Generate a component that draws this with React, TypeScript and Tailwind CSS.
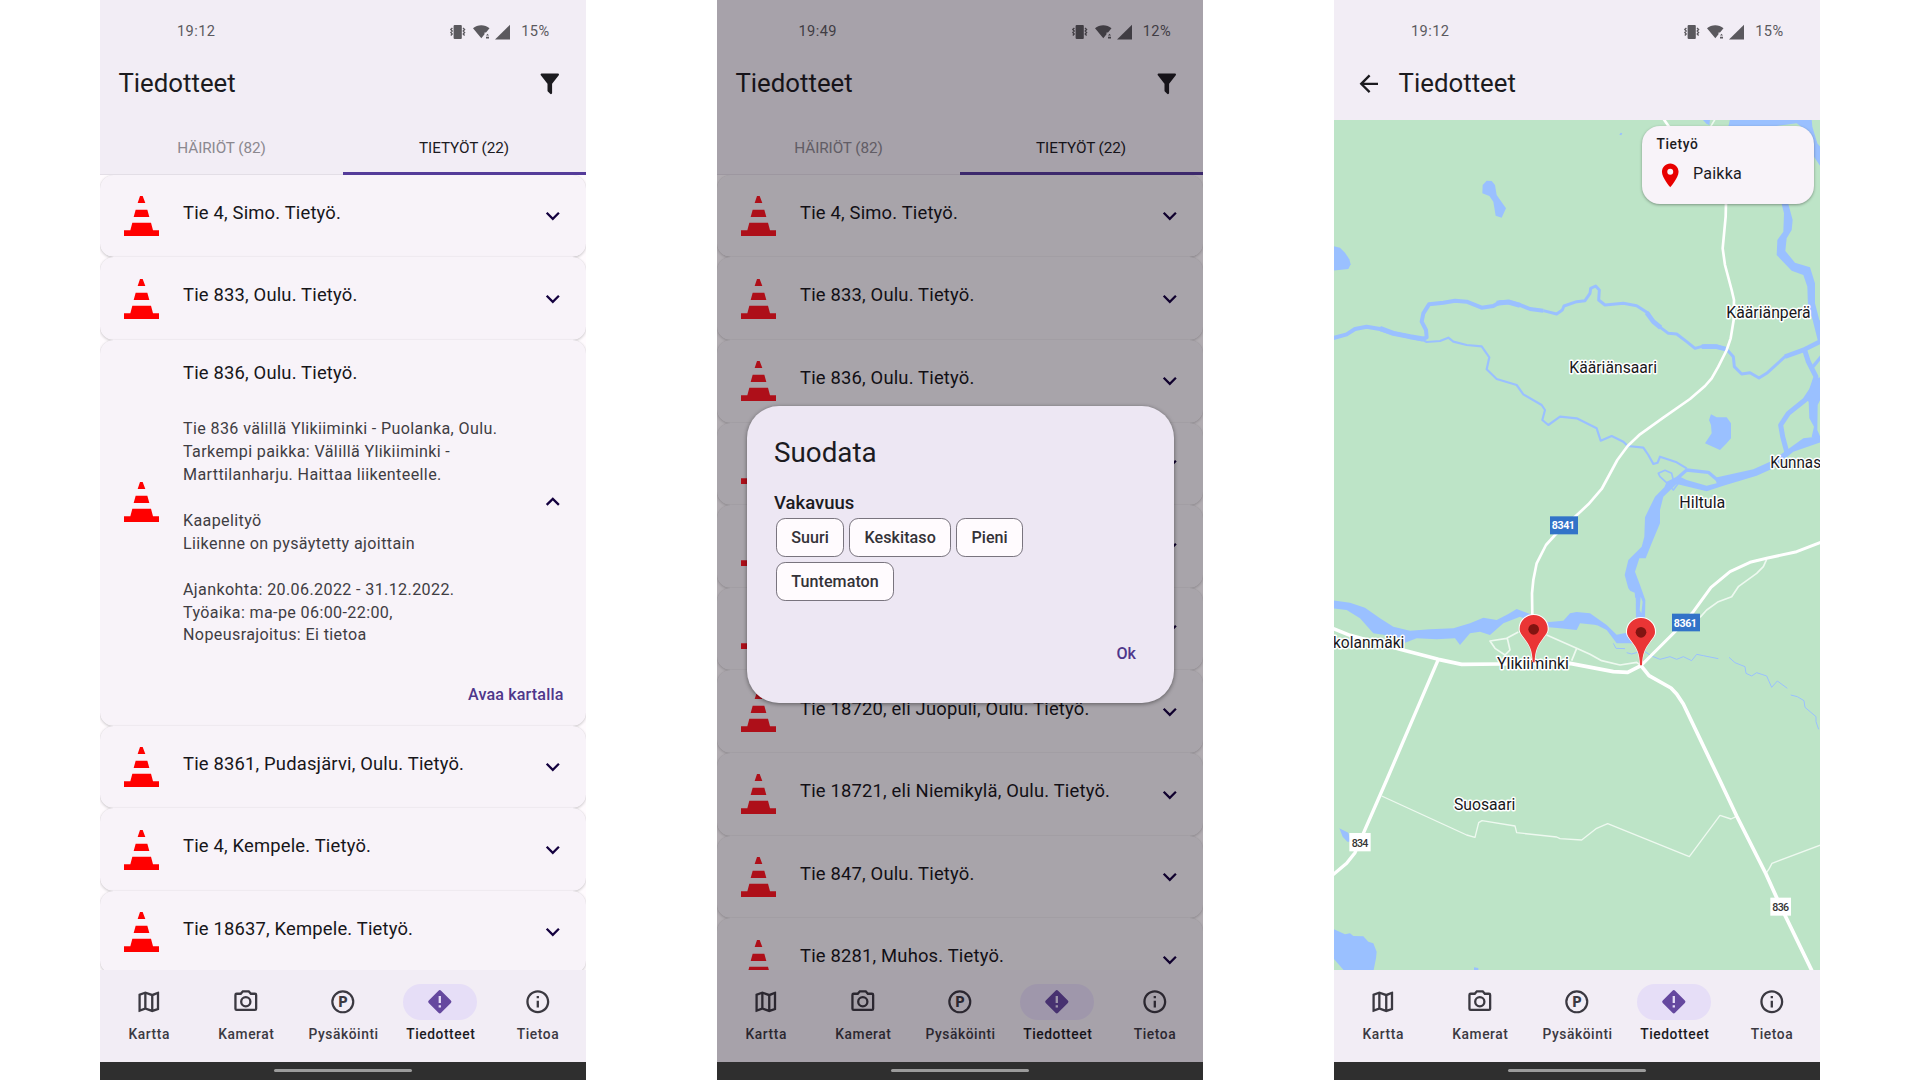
import React from "react";
import { MdExpandMore, MdExpandLess, MdArrowBack, MdOutlineInfo, MdLocationOn } from "react-icons/md";

const PATHS = {
  filter:
    "M14,12V19.88C14.04,20.18 13.94,20.5 13.71,20.71C13.32,21.1 12.69,21.1 12.3,20.71L10.29,18.7C10.06,18.47 9.96,18.16 10,17.87V12H9.97L4.21,4.62C3.87,4.19 3.95,3.56 4.38,3.22C4.57,3.08 4.78,3 5,3H19C19.22,3 19.43,3.08 19.62,3.22C20.05,3.56 20.13,4.19 19.79,4.62L14.03,12H14Z",
  map: "M20.5,3L20.34,3.03L15,5.1L9,3L3.36,4.9C3.15,4.97 3,5.15 3,5.38V20.5A0.5,0.5 0 0,0 3.5,21L3.66,20.97L9,18.9L15,21L20.64,19.1C20.85,19.03 21,18.85 21,18.62V3.5A0.5,0.5 0 0,0 20.5,3M10,5.47L14,6.87V18.53L10,17.13V5.47M5,6.46L8,5.45V17.15L5,18.31V6.46M19,17.54L16,18.55V6.86L19,5.7V17.54Z",
  camera:
    "M20,4H16.83L15,2H9L7.17,4H4A2,2 0 0,0 2,6V18A2,2 0 0,0 4,20H20A2,2 0 0,0 22,18V6A2,2 0 0,0 20,4M20,18H4V6H8.05L9.88,4H14.12L15.95,6H20V18M12,7A5,5 0 0,0 7,12A5,5 0 0,0 12,17A5,5 0 0,0 17,12A5,5 0 0,0 12,7M12,15A3,3 0 0,1 9,12A3,3 0 0,1 12,9A3,3 0 0,1 15,12A3,3 0 0,1 12,15Z",
};

function Glyph({ d }: { d: string }) {
  return (
    <svg viewBox="0 0 24 24" className="size-[27.6px] fill-current">
      <path d={d} />
    </svg>
  );
}

function StatusBar({ time, battery, shifted }: { time: string; battery: string; shifted?: boolean }) {
  return (
    <div
      className={
        "flex h-[62px] shrink-0 items-center pt-[2px] text-[14.6px] tracking-[0.4px] text-[#5b595e] " +
        (shifted ? "pr-[32px] pl-[81.5px]" : "pr-[36.5px] pl-[77px]")
      }
    >
      <span>{time}</span>
      <svg viewBox="0 0 60 16" className="mr-px mb-px ml-auto h-4 w-[60px] fill-[#5b595e]">
        <rect x="3.6" y="1" width="8.2" height="14" rx="1" />
        <path
          d="M2.4 4 L.8 5.5 L2.2 7 L.8 8.5 L2.2 10 L.8 11.5 M13 4 L14.6 5.5 L13.2 7 L14.6 8.5 L13.2 10 L14.6 11.5"
          fill="none"
          stroke="#5b595e"
          strokeWidth="1.3"
        />
        <path d="M23 4.3 C27.5 .3 35 .3 39.5 4.3 L36 8.4 L34.5 8.4 L34.5 10.3 L31.3 14.2 Z" />
        <path d="M36 11.4 L37.5 9.8 L39 11.4Z M36 12.8 H39 V14.4 H36Z" />
        <path d="M60 .8 V15.6 H45 Z" />
      </svg>
      <span className="ml-[10px]">{battery}</span>
    </div>
  );
}

function Cone({ muted }: { muted?: boolean }) {
  return (
    <svg viewBox="102 587 105 120" className={"ml-6 h-10 w-[35px] shrink-0 " + (muted ? "fill-[#fd161f]" : "fill-[#ff0000]")}>
      <path d="M150 587H158L166 608H143Z M137 628H172L178 650H131Z M127 667H183L189 690H207V707H102V690H121Z" />
    </svg>
  );
}

const cardClass =
  "shrink-0 rounded-[13.8px] shadow-[0_1px_3px_rgba(0,0,0,0.2),0_0_1px_rgba(0,0,0,0.08)] text-[#17161a] ";
const rowTitle = "text-[18.4px] leading-[27px] tracking-[0.18px]";

function Row({ title, muted }: { title: string; muted?: boolean }) {
  return (
    <div className={cardClass + "flex h-[82.65px] items-center " + (muted ? "bg-[#f4f1f5]" : "bg-[#f8f3f9]")}>
      <Cone muted={muted} />
      <div className={rowTitle + " ml-6 flex-1 pb-[7.5px] whitespace-nowrap"}>{title}</div>
      <MdExpandMore className="mr-[19.1px] size-[27.6px] text-[#14003f]" />
    </div>
  );
}

function ExpandedRow() {
  return (
    <div className={cardClass + "flex h-[385.8px] flex-col bg-[#f8f3f9]"}>
      <div className="flex h-[324px] items-center">
        <Cone />
        <div className="ml-6 flex-1 self-stretch pt-[19.4px]">
          <div className={rowTitle}>Tie 836, Oulu. Tietyö.</div>
          <div className="mt-[31.6px] text-[16.1px] leading-[22.96px] tracking-[0.37px] whitespace-pre text-[#3f3d43]">
            {`Tie 836 välillä Ylikiiminki - Puolanka, Oulu.
Tarkempi paikka: Välillä Ylikiiminki -
Marttilanharju. Haittaa liikenteelle.

Kaapelityö
Liikenne on pysäytetty ajoittain

Ajankohta: 20.06.2022 - 31.12.2022.
Työaika: ma-pe 06:00-22:00,
Nopeusrajoitus: Ei tietoa`}
          </div>
        </div>
        <MdExpandLess className="mr-[19.1px] size-[27.6px] text-[#14003f]" />
      </div>
      <button className="mt-[19.5px] mr-[22.5px] self-end text-[16.1px] leading-6 font-medium tracking-[0.15px] text-[#4f378b]">
        Avaa kartalla
      </button>
    </div>
  );
}

function NavItem({ label, active, children }: { label: string; active?: boolean; children: React.ReactNode }) {
  return (
    <div className={"flex w-1/5 flex-col items-center " + (active ? "text-[#1c1b1f]" : "text-[#3b3941]")}>
      <div
        className={
          "flex h-9 w-[73.6px] items-center justify-center rounded-full " + (active ? "bg-[#e6def7] text-[#65489f]" : "")
        }
      >
        {children}
      </div>
      <span className="mt-[4.5px] pl-[1.2px] text-[13.8px] leading-[18px] font-medium tracking-[0.57px]">{label}</span>
    </div>
  );
}

function BottomNav() {
  return (
    <div className="flex h-[91.5px] shrink-0 bg-[#f2edf5] pt-[14px]">
      <NavItem label="Kartta">
        <Glyph d={PATHS.map} />
      </NavItem>
      <NavItem label="Kamerat">
        <Glyph d={PATHS.camera} />
      </NavItem>
      <NavItem label="Pysäköinti">
        <svg viewBox="0 0 24 24" className="size-[27.6px]">
          <circle cx="12" cy="12" r="9.1" fill="none" stroke="currentColor" strokeWidth="1.9" />
          <text x="12.2" y="16.4" textAnchor="middle" className="fill-current text-[12.2px] font-black">
            P
          </text>
        </svg>
      </NavItem>
      <NavItem label="Tiedotteet" active>
        <svg viewBox="0 0 24 24" className="size-[27.6px]">
          <rect x="4.4" y="4.4" width="15.2" height="15.2" rx="1.6" transform="rotate(45 12 12)" className="fill-current" />
          <path d="M11 7H13V13H11Z M11 15H13V17H11Z" fill="#e6def7" />
        </svg>
      </NavItem>
      <NavItem label="Tietoa">
        <MdOutlineInfo className="size-[27.6px]" />
      </NavItem>
    </div>
  );
}

function GestureBar() {
  return (
    <div className="flex h-[18.5px] shrink-0 justify-center bg-[#2f2f2f] pt-[7px]">
      <div className="h-[3.5px] w-[138px] rounded-full bg-[#9b9b9b]" />
    </div>
  );
}

function ListHeader() {
  return (
    <>
      <div className="flex h-[43px] shrink-0 items-center justify-between pr-[22.6px] pl-[18.4px] text-[#1c1b1f]">
        <h1 className="pb-[2px] text-[25.8px] leading-8">Tiedotteet</h1>
        <Glyph d={PATHS.filter} />
      </div>
      <div className="flex h-[70px] shrink-0 text-[15.3px] leading-6 tracking-[-0.1px]">
        <div className="flex w-1/2 justify-center border-b border-[#e3dee6] pt-[31px] text-[#8b888f]">HÄIRIÖT (82)</div>
        <div className="flex w-1/2 justify-center border-b-3 border-[#553c9a] pt-[31px] pr-[1px] text-[#1c1b1f]">
          TIETYÖT (22)
        </div>
      </div>
    </>
  );
}

const phone = "flex h-[1080px] w-[486px] shrink-0 flex-col overflow-hidden bg-[#fffbfe]";

function ListPhone() {
  return (
    <section className={phone}>
      <div className="z-10 flex flex-col bg-[#f2edf5]">
        <StatusBar time="19:12" battery="15%" />
        <ListHeader />
      </div>
      <div className="-mt-[0.4px] flex min-h-0 flex-1 flex-col overflow-hidden">
        <Row title="Tie 4, Simo. Tietyö." />
        <Row title="Tie 833, Oulu. Tietyö." />
        <ExpandedRow />
        <Row title="Tie 8361, Pudasjärvi, Oulu. Tietyö." />
        <Row title="Tie 4, Kempele. Tietyö." />
        <Row title="Tie 18637, Kempele. Tietyö." />
      </div>
      <BottomNav />
      <GestureBar />
    </section>
  );
}

function Chip({ label }: { label: string }) {
  return (
    <span className="flex h-[39px] items-center rounded-[9.2px] border border-[#79747e] bg-[#fffbfe] px-[14.3px] pt-[2px] text-[16.1px] font-medium tracking-[0.05px] text-[#343238]">
      {label}
    </span>
  );
}

function FilterDialog() {
  return (
    <div className="flex h-[297px] w-[427px] flex-col rounded-[32px] bg-[#ede7f3] px-[27.5px] pt-[28px] text-[#1c1b1f] shadow-[0_1px_4px_rgba(0,0,0,0.45)]">
      <h2 className="text-[27.8px] leading-[38px]">Suodata</h2>
      <h3 className="mt-[18.5px] text-[18.5px] leading-[26px] font-medium">Vakavuus</h3>
      <div className="mt-[1.5px] flex w-[300px] flex-wrap gap-x-[5px] gap-y-[5px] pl-[2px]">
        <Chip label="Suuri" />
        <Chip label="Keskitaso" />
        <Chip label="Pieni" />
        <Chip label="Tuntematon" />
      </div>
      <button className="mt-[41px] mr-[10px] self-end text-[16.1px] leading-6 font-medium text-[#4f378b]">Ok</button>
    </div>
  );
}

function DialogPhone() {
  return (
    <section className={phone + " relative"}>
      <div className="z-10 flex flex-col bg-[#f2edf5]">
        <StatusBar time="19:49" battery="12%" shifted />
        <ListHeader />
      </div>
      <div className="-mt-[0.4px] flex min-h-0 flex-1 flex-col overflow-hidden">
        <Row muted title="Tie 4, Simo. Tietyö." />
        <Row muted title="Tie 833, Oulu. Tietyö." />
        <Row muted title="Tie 836, Oulu. Tietyö." />
        <Row muted title="" />
        <Row muted title="" />
        <Row muted title="" />
        <Row muted title="Tie 18720, eli Juopuli, Oulu. Tietyö." />
        <Row muted title="Tie 18721, eli Niemikylä, Oulu. Tietyö." />
        <Row muted title="Tie 847, Oulu. Tietyö." />
        <Row muted title="Tie 8281, Muhos. Tietyö." />
      </div>
      <BottomNav />
      <GestureBar />
      <div className="absolute inset-x-0 top-0 bottom-[18.5px] z-20 flex justify-center bg-[rgba(8,4,12,0.32)] pt-[405.5px]">
        <FilterDialog />
      </div>
    </section>
  );
}

function Place({ x, y, w, children }: { x: number; y: number; w: number; children: string }) {
  return (
    <text
      x={x}
      y={y}
      textLength={w}
      lengthAdjust="spacingAndGlyphs"
      paintOrder="stroke"
      stroke="#fff"
      strokeWidth="9"
      strokeLinejoin="round"
      fill="#18171b"
      fontSize="49.5"
    >
      {children}
    </text>
  );
}

function Pin({ x, y }: { x: number; y: number }) {
  return (
    <g transform={`translate(${x} ${y})`}>
      <path
        d="M-5 97 C-6 62 -14 48 -28 30 C-38 16 -45 10 -45 -2 A45 44 0 1 1 45 -2 C45 10 38 16 28 30 C14 48 6 62 5 97Z"
        fill="#fff"
      />
      <path
        d="M-3 99 C-4 62 -12 48 -27 28 C-36 15 -42 10 -42 -2 A42 41 0 1 1 42 -2 C42 10 36 15 27 28 C12 48 4 62 3 99Z"
        fill="#ea3535"
      />
      <circle r="16" fill="#811411" />
    </g>
  );
}

function RoadMap() {
  return (
    <svg viewBox="0 0 486 850" className="h-[850px] w-full font-['Roboto',sans-serif]">
      <g transform="translate(-4 160) scale(0.333333)">
        {/* lakes */}
        <g fill="#9ac0ff">
          <path d="M457 -260L458 -285L470 -298L485 -297L495 -285L500 -255L528 -215L515 -187L497 -193L490 -235L478 -252Z" />
          <path d="M868 -436L872 -442L877 -440L874 -434Z" />
          <path d="M10 -102L30 -97L45 -82L58 -62L62 -47L55 -33L10 -28Z" />
          <path d="M1143 403L1160 412L1190 412L1203 430V475L1190 490L1170 510L1125 490L1145 460L1143 435L1137 420Z" />
          <path d="M10 1947L45 1963L60 1960L70 1968L100 1969L115 1985L130 1990L140 2015L138 2035L130 2075H45L10 2035Z" />
          <path d="M28 1645L55 1658L62 1685H52L38 1670Z M432 2062L445 2064V2075H432Z" />
          <path d="M1117 -482H1140L1138 -464L1128 -470Z" />
          <path d="M1200 -482H1445L1447 -460L1462 -410L1475 -395V-335L1452 -370L1440 -440L1400 -470L1320 -460H1195Z" />
          <path d="M1355 -228L1362 -200L1360 -145L1342 -120L1340 -75L1385 -28L1420 -15L1432 20L1434 80L1448 120L1463 180L1480 190V130L1468 120L1455 70V10L1440 -38L1395 -52L1366 -87L1370 -125L1385 -150L1388 -180L1375 -228Z" />
          <path d="M10 961L60 968L105 983L150 1015L190 1040L240 1052L300 1048L370 1045L420 1030L460 1013L500 1020L535 1002L560 987L600 1002L650 1027L700 1022L720 1000L740 996L780 1000L830 1035L860 1064L890 1058L915 1050V1090H860L830 1050L800 1035L750 1030L740 1050L690 1045L640 1040L570 1010L520 1030L480 1065L450 1055L420 1060L390 1095L375 1075L320 1078L260 1075L225 1088L200 1070L130 1060L90 1015L50 990L10 985Z" />
          <path d="M1003 622L975 650L958 685L945 712L943 770L935 800L895 840L884 885L895 925L917 955L918 1015H945L946 960L930 915L915 875L928 835H947L965 790L990 730V690L1000 650L1040 612L1130 634L1180 617L1280 587L1330 565L1390 515L1475 486V468L1420 475L1350 525L1320 545L1270 568L1155 593L1160 610L1130 617L1070 600L1045 588L1010 605Z" />
          <path d="M1450 300L1475 290V350L1463 375L1462 450L1475 480L1445 470L1452 440L1438 415L1436 365L1425 358Z" />
        </g>
        <g fill="#bde4c7">
          <path d="M900 932L914 938L917 972L905 958Z M932 950L938 965L934 1000L929 990Z" />
        </g>
        {/* streams */}
        <g fill="none" stroke="#9ac0ff" strokeLinejoin="round">
          <path strokeWidth="12" d="M8 175L50 163L75 147L110 140L150 147L190 160L240 170L275 178L290 172L288 150L275 125L280 100L297 73L340 68L375 62L410 65L455 83L490 78L510 67L535 66L570 75L600 87L640 92" />
          <path strokeWidth="15" d="M150 145L190 160L240 170L280 177 M500 70L535 66L570 76" />
          <path strokeWidth="9" d="M640 92L680 102L697 90L702 78L740 65L765 62L780 40L782 25L797 18L808 30L806 60L825 75L880 70L920 77L955 100L970 125L995 145L1015 160L1040 162L1070 185L1095 205L1125 197L1160 198L1190 208L1210 230L1213 260L1235 282L1260 278L1287 294L1310 280L1365 230L1420 210L1475 182" />
          <path strokeWidth="14" d="M950 98L970 125L992 143 M1115 200L1160 200L1190 208 M1365 230L1420 210L1475 182" />
          <path strokeWidth="6.5" d="M280 181L290 186L330 183L355 173L370 185L410 195L455 199L478 232L470 268L500 297L560 315L580 343L635 375L645 390L637 420L655 435L690 410L740 415L800 445L812 482L845 468L880 485L893 498L940 503L955 525L970 552L983 548L990 530L1040 547L1070 565" />
          <path strokeWidth="15" d="M1424 210L1435 245L1458 290L1445 330L1425 360L1375 400L1352 435L1358 470L1370 515" />
          <path strokeWidth="10" d="M1475 228L1447 262 M1030 605L1070 570L1135 577L1165 602" />
          <path strokeWidth="5" d="M985 580L1005 571L1025 580L1030 600L1012 610L990 590Z M1015 615L1030 630L1045 610" />
          <path strokeWidth="3" d="M850 1090L858 1105L885 1106 M890 1118L905 1122L940 1112L965 1128L990 1138L1020 1130L1040 1138L1060 1130L1085 1142L1100 1123L1120 1127L1165 1136 M1197 1132L1215 1148L1245 1160L1248 1180L1265 1188L1280 1178L1310 1188L1325 1222L1342 1203L1372 1225 M1382 1245L1402 1250L1422 1262L1425 1282L1458 1310V1325L1466 1348 M780 1020L800 1035 M232 1075L245 1070" />
        </g>
        {/* minor roads */}
        <g fill="none" stroke="#eef9f0" strokeWidth="5" strokeLinejoin="round">
          <path d="M1155 -482L1142 -460 M1310 838L1300 860L1280 880L1225 920L1205 950L1165 965L1130 990L1110 1012" />
          <path d="M650 1065L740 1105L780 1123L815 1142L870 1155L920 1147L933 1157 M740 1105L725 1142 M565 1056L530 1075L480 1083L495 1105L525 1125L540 1110L532 1075" />
          <path strokeWidth="4" d="M155 1548L410 1665L435 1672L446 1628L456 1622L555 1638L560 1658L680 1671L690 1676L755 1680L800 1645L833 1631L1078 1730L1170 1606L1203 1617L1218 1610 M1308 1780L1318 1765L1326 1750L1475 1694" />
        </g>
        {/* main roads */}
        <g fill="none" stroke="#fff" strokeLinejoin="round">
          <path strokeWidth="8" d="M1000 -484L1017 -460L1188 -232L1187 -190L1178 -95L1185 -45L1205 30L1212 60L1211 120L1202 175L1190 210L1165 260L1145 295L1125 318L1080 357L1000 413L930 463L893 498L862 540L815 627L775 673L735 710L675 765L648 795L620 850L610 900L606 940L607 1010" />
          <path strokeWidth="11" d="M8 1045L60 1066L210 1108L325 1138L395 1153L510 1152L720 1150L850 1175L893 1177L933 1157L957 1187L1023 1224L1040 1242L1060 1272L1168 1498L1220 1608L1308 1782L1350 1875L1447 2075" />
          <path strokeWidth="10" d="M325 1138L170 1500L100 1660L75 1718L50 1750L8 1785" />
          <path strokeWidth="9" d="M933 1157L1040 1050L1090 995L1143 922L1200 875L1260 847L1310 835L1400 815L1475 786" />
        </g>
        {/* road shields */}
        <g fill="#3273c8">
          <rect x="660" y="709" width="84" height="54" />
          <rect x="1026" y="1001" width="84" height="53" />
        </g>
        <g fill="#fff">
          <rect x="58" y="1659" width="64" height="55" />
          <rect x="1321" y="1853" width="62" height="54" />
        </g>
        <g fontSize="32" textAnchor="middle">
          <g fill="#fff" fontWeight="700">
            <text x="700" y="748" textLength="70">8341</text>
            <text x="1066" y="1040" textLength="70">8361</text>
          </g>
          <g fill="#343434" fontWeight="500">
            <text x="90" y="1701" textLength="50">834</text>
            <text x="1352" y="1894" textLength="50">836</text>
          </g>
        </g>
        <Place x={1189} y={115} w={253}>Kääriänperä</Place>
        <Place x={718} y={280} w={263}>Kääriänsaari</Place>
        <Place x={1321} y={564} w={152}>Kunnas</Place>
        <Place x={1048} y={685} w={138}>Hiltula</Place>
        <Place x={9} y={1103} w={214}>kolanmäki</Place>
        <Place x={501} y={1167} w={216}>Ylikiiminki</Place>
        <Place x={372} y={1591} w={184}>Suosaari</Place>
        <Pin x={611} y={1048} />
        <Pin x={933} y={1057} />
      </g>
    </svg>
  );
}

function MapPhone() {
  return (
    <section className={phone}>
      <div className="flex h-[119.5px] shrink-0 flex-col bg-[#f2edf5]">
        <StatusBar time="19:12" battery="15%" />
        <div className="flex h-[43px] items-center pl-[20.5px] text-[#1c1b1f]">
          <MdArrowBack className="size-[27.6px]" />
          <h1 className="ml-[16.5px] pb-[2px] text-[25.8px] leading-8">Tiedotteet</h1>
        </div>
      </div>
      <div className="relative min-h-0 flex-1 overflow-hidden bg-[#bde4c7]">
        <RoadMap />
        <div className="absolute top-[6px] right-[6px] flex h-[78px] w-[172px] flex-col rounded-[18px] bg-[#f8f3f9] pt-[8.4px] pl-[14.5px] text-[#1c1b1f] shadow-[0_1px_3px_rgba(0,0,0,0.35)]">
          <span className="text-[13.8px] leading-[20px] font-medium tracking-[0.57px]">Tietyö</span>
          <div className="-ml-[0.7px] flex items-center pt-[7px]">
            <MdLocationOn className="size-[28.5px] text-[#e80000]" />
            <span className="ml-[8.7px] pb-[2px] text-[16.1px] leading-6 tracking-[0.2px]">Paikka</span>
          </div>
        </div>
      </div>
      <BottomNav />
      <GestureBar />
    </section>
  );
}

export default function App() {
  return (
    <main className="flex h-[1080px] w-[1920px] gap-[131px] overflow-hidden bg-white pl-[100px] font-['Roboto',sans-serif]">
      <ListPhone />
      <DialogPhone />
      <MapPhone />
    </main>
  );
}
